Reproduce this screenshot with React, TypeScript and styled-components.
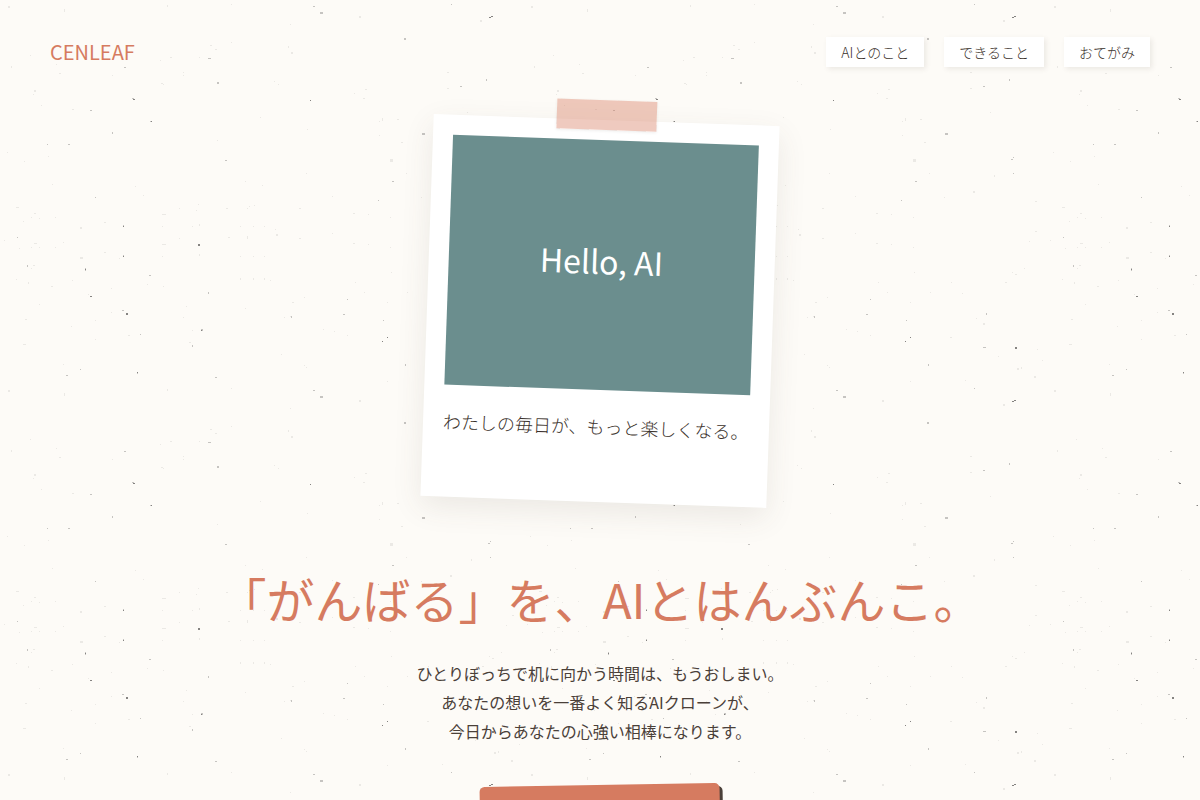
import React from 'react';
import styled, { createGlobalStyle } from 'styled-components';

const ink = '#4a4039';
const inkThin = '#3a312b';
const coral = '#d67b60';
const paper = '#fdfbf7';
const hand = '"Noto Sans CJK JP", sans-serif';

const GlobalStyle = createGlobalStyle`
  *, *::before, *::after { box-sizing: border-box; }
  body {
    margin: 0;
    background: ${paper};
    color: ${ink};
    font-family: ${hand};
    font-size: 16px;
    line-height: 1.8;
  }
`;

const Page = styled.div`
  position: relative;
  height: 100vh;
  overflow: hidden;
`;

const Texture = styled.svg`
  position: absolute;
  inset: 0;
  width: 100%;
  height: 100%;
  pointer-events: none;
`;

const Header = styled.header`
  position: relative;
  display: flex;
  align-items: center;
  justify-content: space-between;
  padding: 32px 50px;
`;

const Logo = styled.a`
  color: ${coral};
  font-size: 20px;
  line-height: 40px;
  text-decoration: none;
`;

const Nav = styled.nav`
  display: flex;
  gap: 20px;
`;

const NavLink = styled.a`
  padding: 0 15px;
  background: #fff;
  box-shadow: 2px 2px 5px rgba(74, 64, 57, 0.1);
  color: ${inkThin};
  font-size: 14px;
  font-weight: 300;
  line-height: 30px;
  text-decoration: none;
`;

const Hero = styled.main`
  position: relative;
  display: flex;
  flex-direction: column;
  align-items: center;
  padding: 16px 20px 0;
  text-align: center;
`;

const Polaroid = styled.figure`
  position: relative;
  margin: 0 0 60px;
  padding: 20px 20px 60px;
  background: #fff;
  box-shadow: 0 10px 30px rgba(74, 64, 57, 0.1);
  transform: rotate(2deg);
`;

const Tape = styled.span`
  position: absolute;
  top: -20px;
  left: 50%;
  width: 100px;
  height: 30px;
  margin-left: -50px;
  background: rgba(214, 123, 96, 0.4);
  box-shadow: 0 1px 3px rgba(74, 64, 57, 0.1);
`;

const Photo = styled.div`
  display: flex;
  align-items: center;
  justify-content: center;
  height: 250px;
  padding-bottom: 8px;
  background: #6b8e8e;
  color: #fff;
  font-size: 32px;
  font-weight: 400;
`;

const Caption = styled.figcaption`
  margin-top: 20px;
  color: ${inkThin};
  font-size: 18px;
  font-weight: 300;
  line-height: 32px;
`;

const Title = styled.h1`
  margin: 0 0 25px;
  color: ${coral};
  font-size: 48px;
  font-weight: 400;
  line-height: 72px;
`;

const Lead = styled.p`
  margin: 0 0 39px;
  font-size: 16px;
  line-height: 29px;
`;

const Cta = styled.button`
  width: 240px;
  height: 60px;
  border: 0;
  border-radius: 5px;
  background: ${coral};
  box-shadow: 3px 3px 0 ${ink};
  transform: rotate(-1deg);
`;

type Speck = [number, number, number, number];

const faint: Speck[] = [
  [8, 6, 2, 2], [64, 9, 1, 3], [167, 5, 1, 2], [231, 4, 1, 1], [359, 16, 2, 2], [290, 24, 1, 1],
  [210, 45, 2, 1], [215, 49, 2, 1], [231, 42, 1, 1], [288, 46, 1, 2], [291, 52, 2, 2], [30, 55, 1, 1],
  [11, 66, 1, 2], [56, 64, 1, 1], [59, 73, 2, 1], [112, 75, 1, 1], [160, 60, 1, 1], [170, 57, 2, 1],
  [199, 57, 1, 1], [183, 72, 1, 1], [183, 75, 1, 1], [161, 83, 2, 1], [163, 84, 1, 1], [34, 90, 2, 2],
  [33, 94, 1, 1], [41, 105, 1, 1], [72, 109, 2, 1], [274, 81, 1, 1], [278, 84, 1, 1], [365, 89, 2, 1],
  [354, 93, 1, 1], [363, 98, 2, 1], [382, 118, 1, 3], [397, 119, 2, 1], [379, 121, 1, 1], [379, 135, 1, 1],
  [260, 117, 1, 1], [307, 129, 1, 1], [217, 140, 1, 1], [390, 159, 3, 3], [306, 173, 1, 1], [7, 152, 1, 1],
  [24, 161, 1, 1], [48, 156, 1, 1], [52, 184, 1, 1], [135, 186, 1, 1], [143, 195, 1, 1], [245, 181, 1, 1],
  [262, 185, 1, 1], [332, 196, 1, 1], [16, 207, 3, 1], [34, 213, 2, 1], [31, 217, 1, 1], [39, 218, 1, 1],
  [55, 217, 1, 1], [23, 221, 1, 1], [80, 227, 2, 2], [104, 222, 2, 1], [162, 214, 4, 1], [179, 208, 1, 1],
  [196, 210, 1, 1], [198, 204, 1, 1], [199, 224, 1, 2], [192, 226, 1, 1], [162, 226, 1, 1], [226, 208, 2, 1],
  [247, 208, 1, 1], [249, 206, 1, 1], [254, 205, 1, 1], [299, 208, 2, 1], [353, 213, 2, 1], [368, 214, 1, 1],
  [390, 217, 1, 1], [240, 226, 1, 1], [253, 226, 1, 1], [264, 226, 1, 1], [275, 229, 1, 1], [276, 234, 2, 2],
  [228, 237, 2, 1], [247, 236, 1, 3], [179, 238, 1, 1], [4, 240, 1, 1], [19, 248, 1, 1], [31, 247, 1, 1],
  [34, 243, 3, 1], [39, 247, 1, 1], [55, 247, 1, 1], [63, 242, 1, 1], [80, 257, 3, 2], [104, 252, 2, 1],
  [162, 244, 4, 1], [199, 254, 1, 2], [162, 256, 1, 1], [240, 256, 1, 1], [253, 256, 1, 1], [264, 256, 1, 1],
  [299, 238, 2, 1], [332, 233, 1, 1], [353, 243, 2, 1], [368, 244, 1, 1], [390, 247, 1, 1], [119, 258, 1, 1],
  [33, 265, 2, 1], [31, 268, 1, 1], [16, 279, 1, 1], [28, 282, 1, 2], [51, 286, 2, 1], [72, 280, 1, 1],
  [111, 288, 1, 1], [147, 284, 1, 1], [163, 286, 1, 1], [88, 294, 1, 1], [240, 278, 1, 2], [253, 278, 1, 2],
  [264, 278, 1, 2], [270, 280, 1, 1], [355, 282, 1, 1], [391, 272, 1, 1], [364, 292, 1, 1], [304, 297, 1, 1],
  [292, 302, 2, 1], [387, 302, 1, 1], [39, 304, 1, 1], [111, 312, 1, 1], [95, 320, 1, 1], [25, 319, 2, 1],
  [71, 326, 1, 1], [186, 306, 1, 1], [183, 317, 1, 1], [245, 308, 1, 1], [284, 317, 1, 1], [290, 316, 2, 1],
  [192, 330, 1, 1], [189, 342, 2, 1], [128, 335, 2, 1], [95, 339, 1, 1], [23, 344, 3, 1], [323, 329, 1, 1],
  [334, 331, 1, 1], [347, 335, 1, 1], [281, 354, 1, 1], [304, 365, 1, 1], [306, 367, 1, 1], [387, 381, 1, 1],
  [63, 364, 1, 1], [401, 142, 2, 1], [406, 173, 1, 1], [421, 197, 1, 1], [447, 88, 2, 1], [467, 112, 1, 1],
  [480, 20, 2, 2], [471, 175, 1, 2], [450, 191, 2, 2], [447, 72, 2, 1], [512, 201, 2, 1], [534, 67, 1, 1],
  [512, 231, 2, 1], [506, 241, 1, 1], [428, 282, 1, 1], [407, 292, 1, 1], [439, 293, 1, 1], [482, 282, 2, 1],
  [489, 272, 1, 1], [501, 268, 1, 1], [492, 274, 2, 1], [453, 318, 1, 1], [460, 323, 2, 2], [427, 337, 2, 1],
  [475, 356, 1, 1], [494, 368, 2, 2], [498, 367, 1, 2], [514, 349, 1, 1], [519, 360, 1, 1], [511, 376, 2, 2],
  [442, 380, 1, 1],
];

const medium: Speck[] = [
  [313, 6, 2, 1], [320, 12, 3, 2], [208, 58, 3, 1], [124, 67, 2, 1], [217, 82, 2, 2], [90, 110, 2, 1],
  [112, 132, 1, 2], [47, 144, 1, 1], [68, 144, 2, 1], [225, 160, 2, 1], [95, 197, 1, 1], [392, 181, 2, 1],
  [378, 200, 1, 1], [17, 237, 1, 1], [27, 265, 1, 2], [149, 275, 2, 1], [208, 292, 1, 2], [122, 310, 2, 1],
  [140, 334, 1, 1], [192, 345, 1, 2], [343, 314, 2, 1], [347, 299, 1, 1], [291, 316, 1, 2], [383, 320, 1, 1],
  [80, 369, 1, 1], [66, 375, 2, 1], [215, 377, 2, 1], [404, 38, 2, 2], [451, 4, 1, 1], [460, 86, 2, 1],
  [486, 79, 1, 2], [422, 133, 3, 2], [488, 159, 2, 1], [490, 157, 1, 1], [490, 173, 1, 1], [463, 313, 1, 2],
  [405, 364, 1, 2], [460, 347, 3, 1], [85, 268, 1, 3], [123, 225, 1, 2], [123, 255, 1, 2], [201, 329, 2, 2],
  [137, 372, 1, 2], [132, 98, 2, 1], [150, 121, 2, 1],
];

const dark: Speck[] = [
  [133, 99, 2, 1], [151, 121, 1, 1], [310, 100, 1, 1], [123, 226, 1, 1], [198, 244, 2, 2],
  [123, 256, 1, 1], [85, 269, 1, 1], [90, 296, 2, 1], [126, 313, 2, 2], [201, 330, 1, 1], [137, 372, 1, 1],
  [387, 337, 1, 1], [382, 341, 1, 1], [489, 17, 2, 1], [491, 16, 2, 1], [492, 347, 2, 2],
];

const trace = (specks: Speck[]) =>
  specks.map(([x, y, w, h]) => `M${x} ${y}h${w}v${h}h-${w}z`).join('');

const PaperTexture = () => (
  <Texture aria-hidden="true">
    <defs>
      <pattern id="paper" width="523" height="384" patternUnits="userSpaceOnUse" shapeRendering="crispEdges">
        <path d={trace(faint)} fill="#ebe9e5" />
        <path d={trace(medium)} fill="#c6c4c1" />
        <path d={trace(dark)} fill="#858381" />
      </pattern>
    </defs>
    <rect width="100%" height="100%" fill="url(#paper)" />
  </Texture>
);

export default function App() {
  return (
    <>
      <GlobalStyle />
      <Page>
        <PaperTexture />
        <Header>
          <Logo href="#top">CENLEAF</Logo>
          <Nav>
            <NavLink href="#about">AIとのこと</NavLink>
            <NavLink href="#features">できること</NavLink>
            <NavLink href="#contact">おてがみ</NavLink>
          </Nav>
        </Header>
        <Hero>
          <Polaroid>
            <Tape />
            <Photo>Hello, AI</Photo>
            <Caption>わたしの毎日が、もっと楽しくなる。</Caption>
          </Polaroid>
          <Title>「がんばる」を、AIとはんぶんこ。</Title>
          <Lead>
            ひとりぼっちで机に向かう時間は、もうおしまい。
            <br />
            あなたの想いを一番よく知るAIクローンが、
            <br />
            今日からあなたの心強い相棒になります。
          </Lead>
          <Cta type="button" />
        </Hero>
      </Page>
    </>
  );
}
